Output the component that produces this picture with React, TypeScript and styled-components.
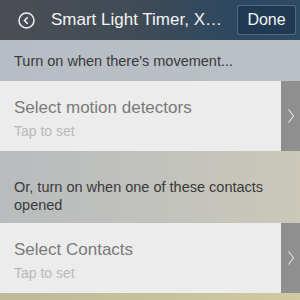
import React from 'react'
import styled, { createGlobalStyle } from 'styled-components'

const GlobalStyle = createGlobalStyle`
  html, body {
    margin: 0;
    padding: 0;
    width: 300px;
    height: 300px;
    overflow: hidden;
  }
  body {
    font-family: "Liberation Sans", Arial, sans-serif;
    background: linear-gradient(90deg, #bdb999 0%, #c9c29f 60%, #d1c9a3 100%);
  }
`

const Screen = styled.div`
  display: flex;
  flex-direction: column;
  width: 300px;
  height: 300px;
`

const NavBar = styled.div`
  display: flex;
  align-items: center;
  height: 40px;
  padding: 0 4px 0 18px;
  box-sizing: border-box;
  background: linear-gradient(90deg, #4b4e53 0%, #3f4b56 45%, #2c4862 80%, #2f4b63 100%);
  color: #fff;
`

const BackButton = styled.div`
  display: flex;
  width: 17px;
  height: 17px;
  margin-right: 16px;
`

const Title = styled.div`
  flex: 1;
  font-size: 17px;
  color: #f4f4f4;
  white-space: nowrap;
  overflow: hidden;
`

const DoneButton = styled.div`
  display: flex;
  align-items: center;
  justify-content: center;
  width: 59px;
  height: 30px;
  box-sizing: border-box;
  border: 1px solid rgba(120, 140, 160, 0.55);
  border-radius: 3px;
  background: #1f3a52;
  font-size: 16px;
  color: #f4f4f4;
`

const SectionHeader = styled.div<{ $height: number; $bg: string; $top?: number }>`
  display: flex;
  align-items: center;
  height: ${({ $height }) => $height}px;
  padding: ${({ $top = 0 }) => $top}px 14px 0;
  box-sizing: border-box;
  background: ${({ $bg }) => $bg};
  font-size: 14.5px;
  line-height: 18px;
  color: #3a3a3a;
`

const Row = styled.div`
  display: flex;
  height: 70px;
  background: #ececec;
`

const RowText = styled.div`
  flex: 1;
  display: flex;
  flex-direction: column;
  justify-content: center;
  padding: 4px 0 0 14px;
`

const RowTitle = styled.div`
  font-size: 17px;
  color: #7a7a7a;
  margin-bottom: 5px;
`

const RowSub = styled.div`
  font-size: 14px;
  color: #b9b9b9;
`

const Chevron = styled.div`
  display: flex;
  align-items: center;
  justify-content: center;
  width: 19px;
  background: #8f8f8f;
`

const ChevronIcon = () => (
  <svg width="8" height="16" viewBox="0 0 8 16">
    <path d="M1.5 1.5 L6.5 8 L1.5 14.5" fill="none" stroke="#e2e2e2" strokeWidth="1.1" />
  </svg>
)

const BackIcon = () => (
  <svg width="17" height="17" viewBox="0 0 17 17">
    <circle cx="8.5" cy="8.5" r="7.5" fill="none" stroke="#f0f0f0" strokeWidth="1.5" />
    <path d="M9.7 5.2 L6.5 8.5 L9.7 11.8" fill="none" stroke="#f0f0f0" strokeWidth="1.6" />
  </svg>
)

const SelectRow = ({ title }: { title: string }) => (
  <Row>
    <RowText>
      <RowTitle>{title}</RowTitle>
      <RowSub>Tap to set</RowSub>
    </RowText>
    <Chevron>
      <ChevronIcon />
    </Chevron>
  </Row>
)

export default function App() {
  return (
    <Screen>
      <GlobalStyle />
      <NavBar>
        <BackButton>
          <BackIcon />
        </BackButton>
        <Title>Smart Light Timer, X…</Title>
        <DoneButton>Done</DoneButton>
      </NavBar>
      <SectionHeader $height={41} $bg="linear-gradient(90deg, #b6bdc4 0%, #bac0c6 100%)">
        Turn on when there's movement...
      </SectionHeader>
      <SelectRow title="Select motion detectors" />
      <SectionHeader
        $height={72}
        $top={18}
        $bg="linear-gradient(90deg, #b8bcbe 0%, #c3c3bd 60%, #cbc8b8 100%)"
      >
        Or, turn on when one of these contacts
        <br />
        opened
      </SectionHeader>
      <SelectRow title="Select Contacts" />
    </Screen>
  )
}
